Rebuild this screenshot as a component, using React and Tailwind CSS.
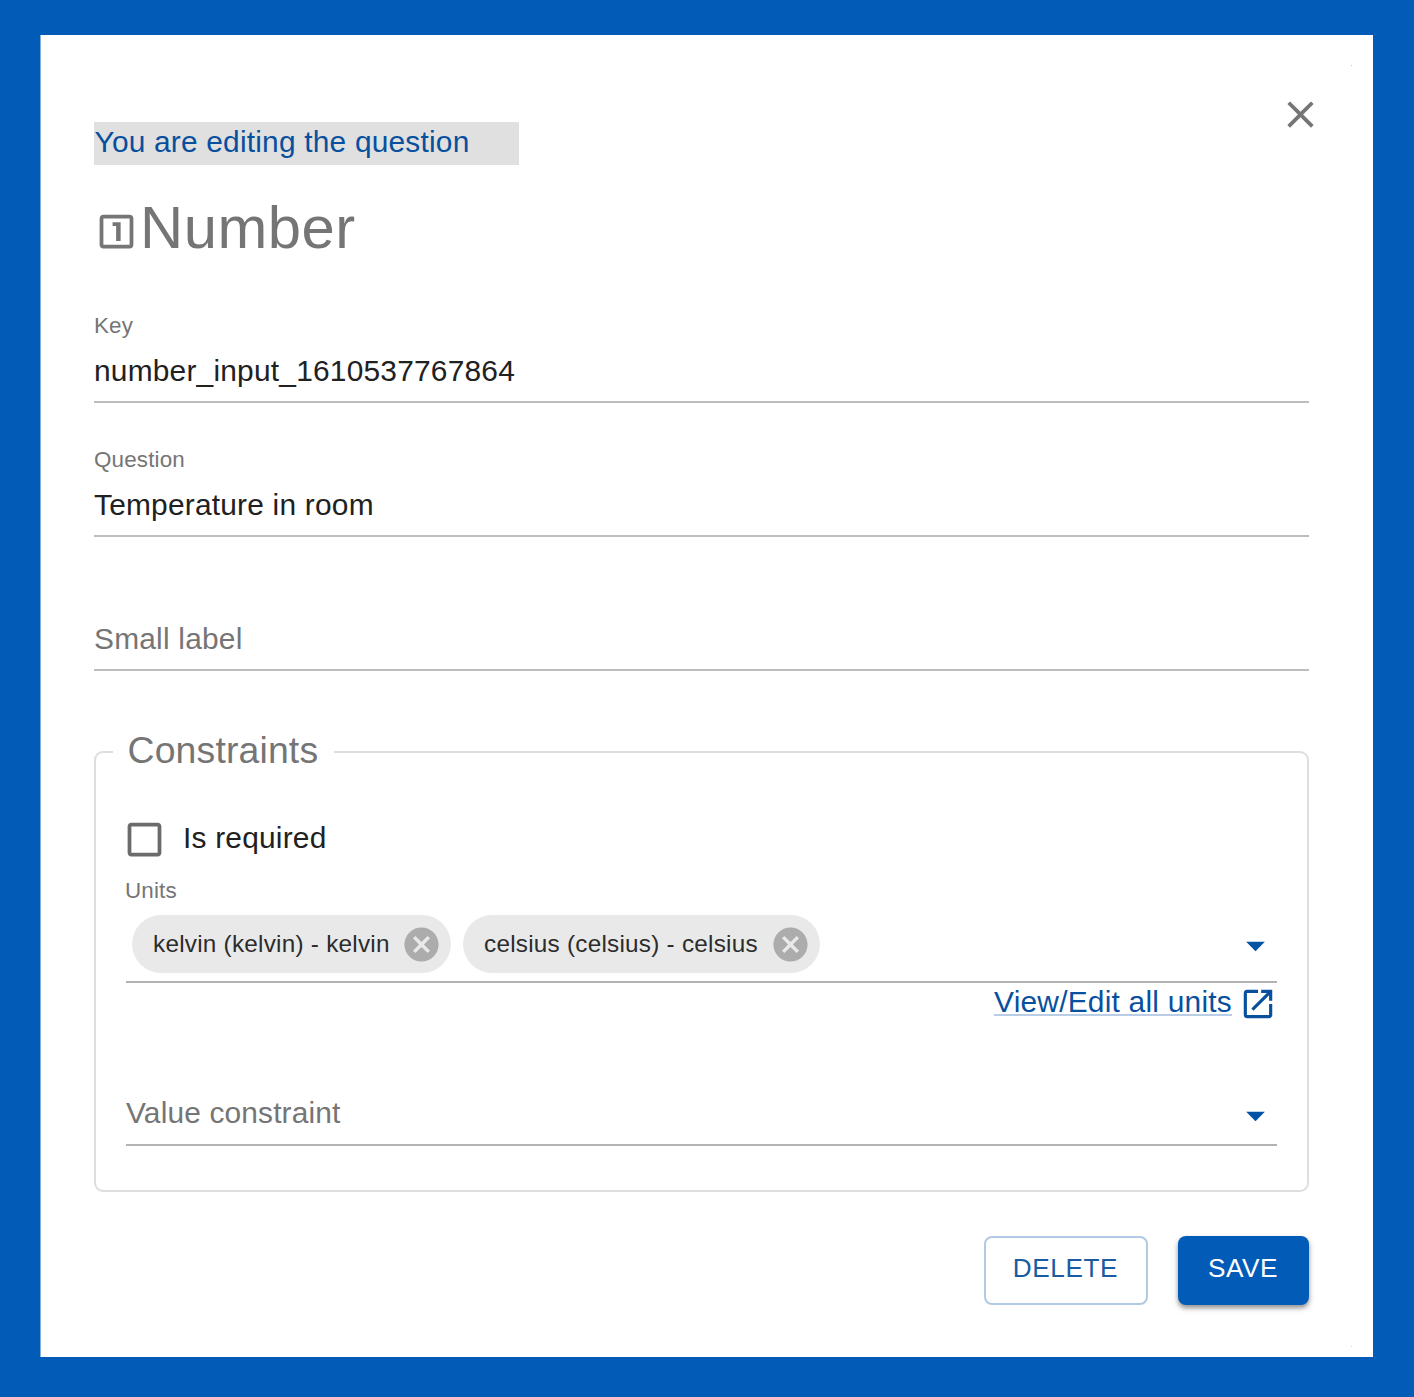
import React from "react";

function Icon({ d, className }) {
  return (
    <svg viewBox="0 0 24 24" fill="currentColor" className={className} aria-hidden="true">
      <path d={d} />
    </svg>
  );
}

const ICONS = {
  close:
    "M19 6.41L17.59 5 12 10.59 6.41 5 5 6.41 10.59 12 5 17.59 6.41 19 12 13.41 17.59 19 19 17.59 13.41 12z",
  one: "M19 3H5c-1.1 0-2 .9-2 2v14c0 1.1.9 2 2 2h14c1.1 0 2-.9 2-2V5c0-1.1-.9-2-2-2zm0 16H5V5h14v14zm-7.2-2h2.4V7h-4.3v2h1.9v8z",
  box: "M19 5v14H5V5h14m0-2H5c-1.1 0-2 .9-2 2v14c0 1.1.9 2 2 2h14c1.1 0 2-.9 2-2V5c0-1.1-.9-2-2-2z",
  cancel:
    "M12 2C6.47 2 2 6.47 2 12s4.47 10 10 10 10-4.47 10-10S17.53 2 12 2zm5 13.59L15.59 17 12 13.41 8.41 17 7 15.59 10.59 12 7 8.41 8.41 7 12 10.59 15.59 7 17 8.41 13.41 12 17 15.59z",
  arrow: "M7 10l5 5 5-5z",
  open: "M19 19H5V5h7V3H5c-1.11 0-2 .9-2 2v14c0 1.1.89 2 2 2h14c1.1 0 2-.9 2-2v-7h-2v7zM14 3v2h3.59l-9.83 9.83 1.41 1.41L19 6.41V10h2V3h-7z",
};

function Field({ label, value, placeholder }) {
  return (
    <div className="h-[134px] border-b-2 border-[#bdbdbd] pt-[46px]">
      <div className="h-[22px] text-[22.4px] leading-[22px] tracking-[0.007em] text-[#757575]">
        {label}
      </div>
      <div
        className={
          value
            ? "mt-[15px] text-[29.9px] leading-[38px] tracking-[0.007em] text-[#212121]"
            : "mt-[15px] text-[29.9px] leading-[38px] tracking-[0.007em] text-[#757575]"
        }
      >
        {value || placeholder}
      </div>
    </div>
  );
}

function Chip({ children, className }) {
  return (
    <div className={`flex h-[58px] items-center rounded-full bg-[#e9e9e9] pl-[21px] ${className}`}>
      <span className="grow whitespace-nowrap pb-px text-[24.3px] leading-[36px] tracking-[0.01em] text-[#2c2c2c]">
        {children}
      </span>
      <Icon d={ICONS.cancel} className="mr-[9px] size-[41px] shrink-0 text-[#acacac]" />
    </div>
  );
}

export default function App() {
  return (
    <div className="h-[1397px] w-[1414px] bg-[#035bb8] pt-[35px] pl-[40px] font-['Liberation_Sans',Arial,sans-serif]">
      <main className="relative h-[1322px] w-[1333px] border-l border-[#84afdd] bg-white pt-[57px] pr-[64px] pl-[53px]">
        <span className="absolute top-[30px] right-[21px] size-px bg-[#c8c8c8]" />
        <span className="absolute right-[21px] bottom-[10px] size-px bg-[#d8d8d8]" />

        <header className="flex h-[99px] justify-between">
          <div className="mt-[30px] h-[43px] w-[424.5px] bg-[#e0e0e0] pl-[0.5px] text-[29.9px] leading-[39px] tracking-[0.0065em] whitespace-nowrap text-[#08509e]">
            You are editing the question
          </div>
          <button className="-mr-[14px] size-[45px] text-[#757575]" aria-label="Close">
            <Icon d={ICONS.close} className="size-[45px]" />
          </button>
        </header>

        <h1 className="flex h-[72px] items-center text-[59.8px] leading-[72px] tracking-[0.008em] text-[#757575]">
          <Icon d={ICONS.one} className="mt-[8px] size-[45px]" />
          <span className="mt-[2px] ml-px">Number</span>
        </h1>

        <div className="mt-[6px]">
          <Field label="Key" value="number_input_1610537767864" />
          <Field label="Question" value="Temperature in room" />
          <Field placeholder="Small label" />
        </div>

        <fieldset className="mt-[59px] h-[462px] rounded-[9px] border-2 border-[#dedede] pr-[30px] pl-[30px]">
          <legend className="-ml-[13px] h-[44px] w-[221px] pl-[14.5px] text-[37.4px] leading-[41px] tracking-[0.004em] text-[#757575]">
            Constraints
          </legend>
          <label className="-ml-[4px] mt-[43px] flex h-[45px] items-center text-[29.9px] tracking-[0.007em] text-[#212121]">
            <Icon d={ICONS.box} className="size-[45px] text-[#6b6b6b]" />
            <span className="ml-[16px] pb-[3px] leading-[36px]">Is required</span>
          </label>

          <div className="-ml-px mt-[18px] text-[22.4px] leading-[22px] tracking-[0.007em] text-[#757575]">Units</div>
          <div className="mt-[13px] flex h-[68px] items-start border-b-2 border-[#b3b3b3] pl-[6px]">
            <Chip className="w-[319px]">kelvin (kelvin) - kelvin</Chip>
            <Chip className="ml-[12px] w-[357px]">celsius (celsius) - celsius</Chip>
            <Icon d={ICONS.arrow} className="mt-[8px] -mr-px ml-auto size-[45px] text-[#0353a4]" />
          </div>

          <div className="flex h-[45px] items-start justify-end text-[29.9px] tracking-[0.0075em] text-[#08509e]">
            <a className="mt-[5px] h-[28px] border-b-2 border-[#b9cee6] leading-[28px] whitespace-nowrap">
              View/Edit all units
            </a>
            <Icon d={ICONS.open} className="mt-[2px] ml-[7px] size-[38px]" />
          </div>

          <div className="mt-[65px] flex h-[53px] justify-between border-b-2 border-[#b3b3b3]">
            <span className="mt-px text-[29.9px] leading-[38px] tracking-[0.005em] text-[#757575]">
              Value constraint
            </span>
            <Icon d={ICONS.arrow} className="-mr-px size-[45px] text-[#0353a4]" />
          </div>
        </fieldset>

        <footer className="mt-[44px] flex justify-end gap-[30px] text-[26.2px] leading-[30px] tracking-[0.022em]">
          <button className="h-[69px] w-[164px] rounded-[8px] border-2 border-[#b1c9e2] pr-px pb-[5px] text-[#1a5ba3]">
            DELETE
          </button>
          <button className="h-[69px] w-[131px] rounded-[8px] bg-[#035bb8] pr-px pb-[5px] text-white shadow-[0_3px_4px_rgba(0,0,0,0.35),0_3px_9px_rgba(0,0,0,0.12)]">
            SAVE
          </button>
        </footer>
      </main>
    </div>
  );
}
